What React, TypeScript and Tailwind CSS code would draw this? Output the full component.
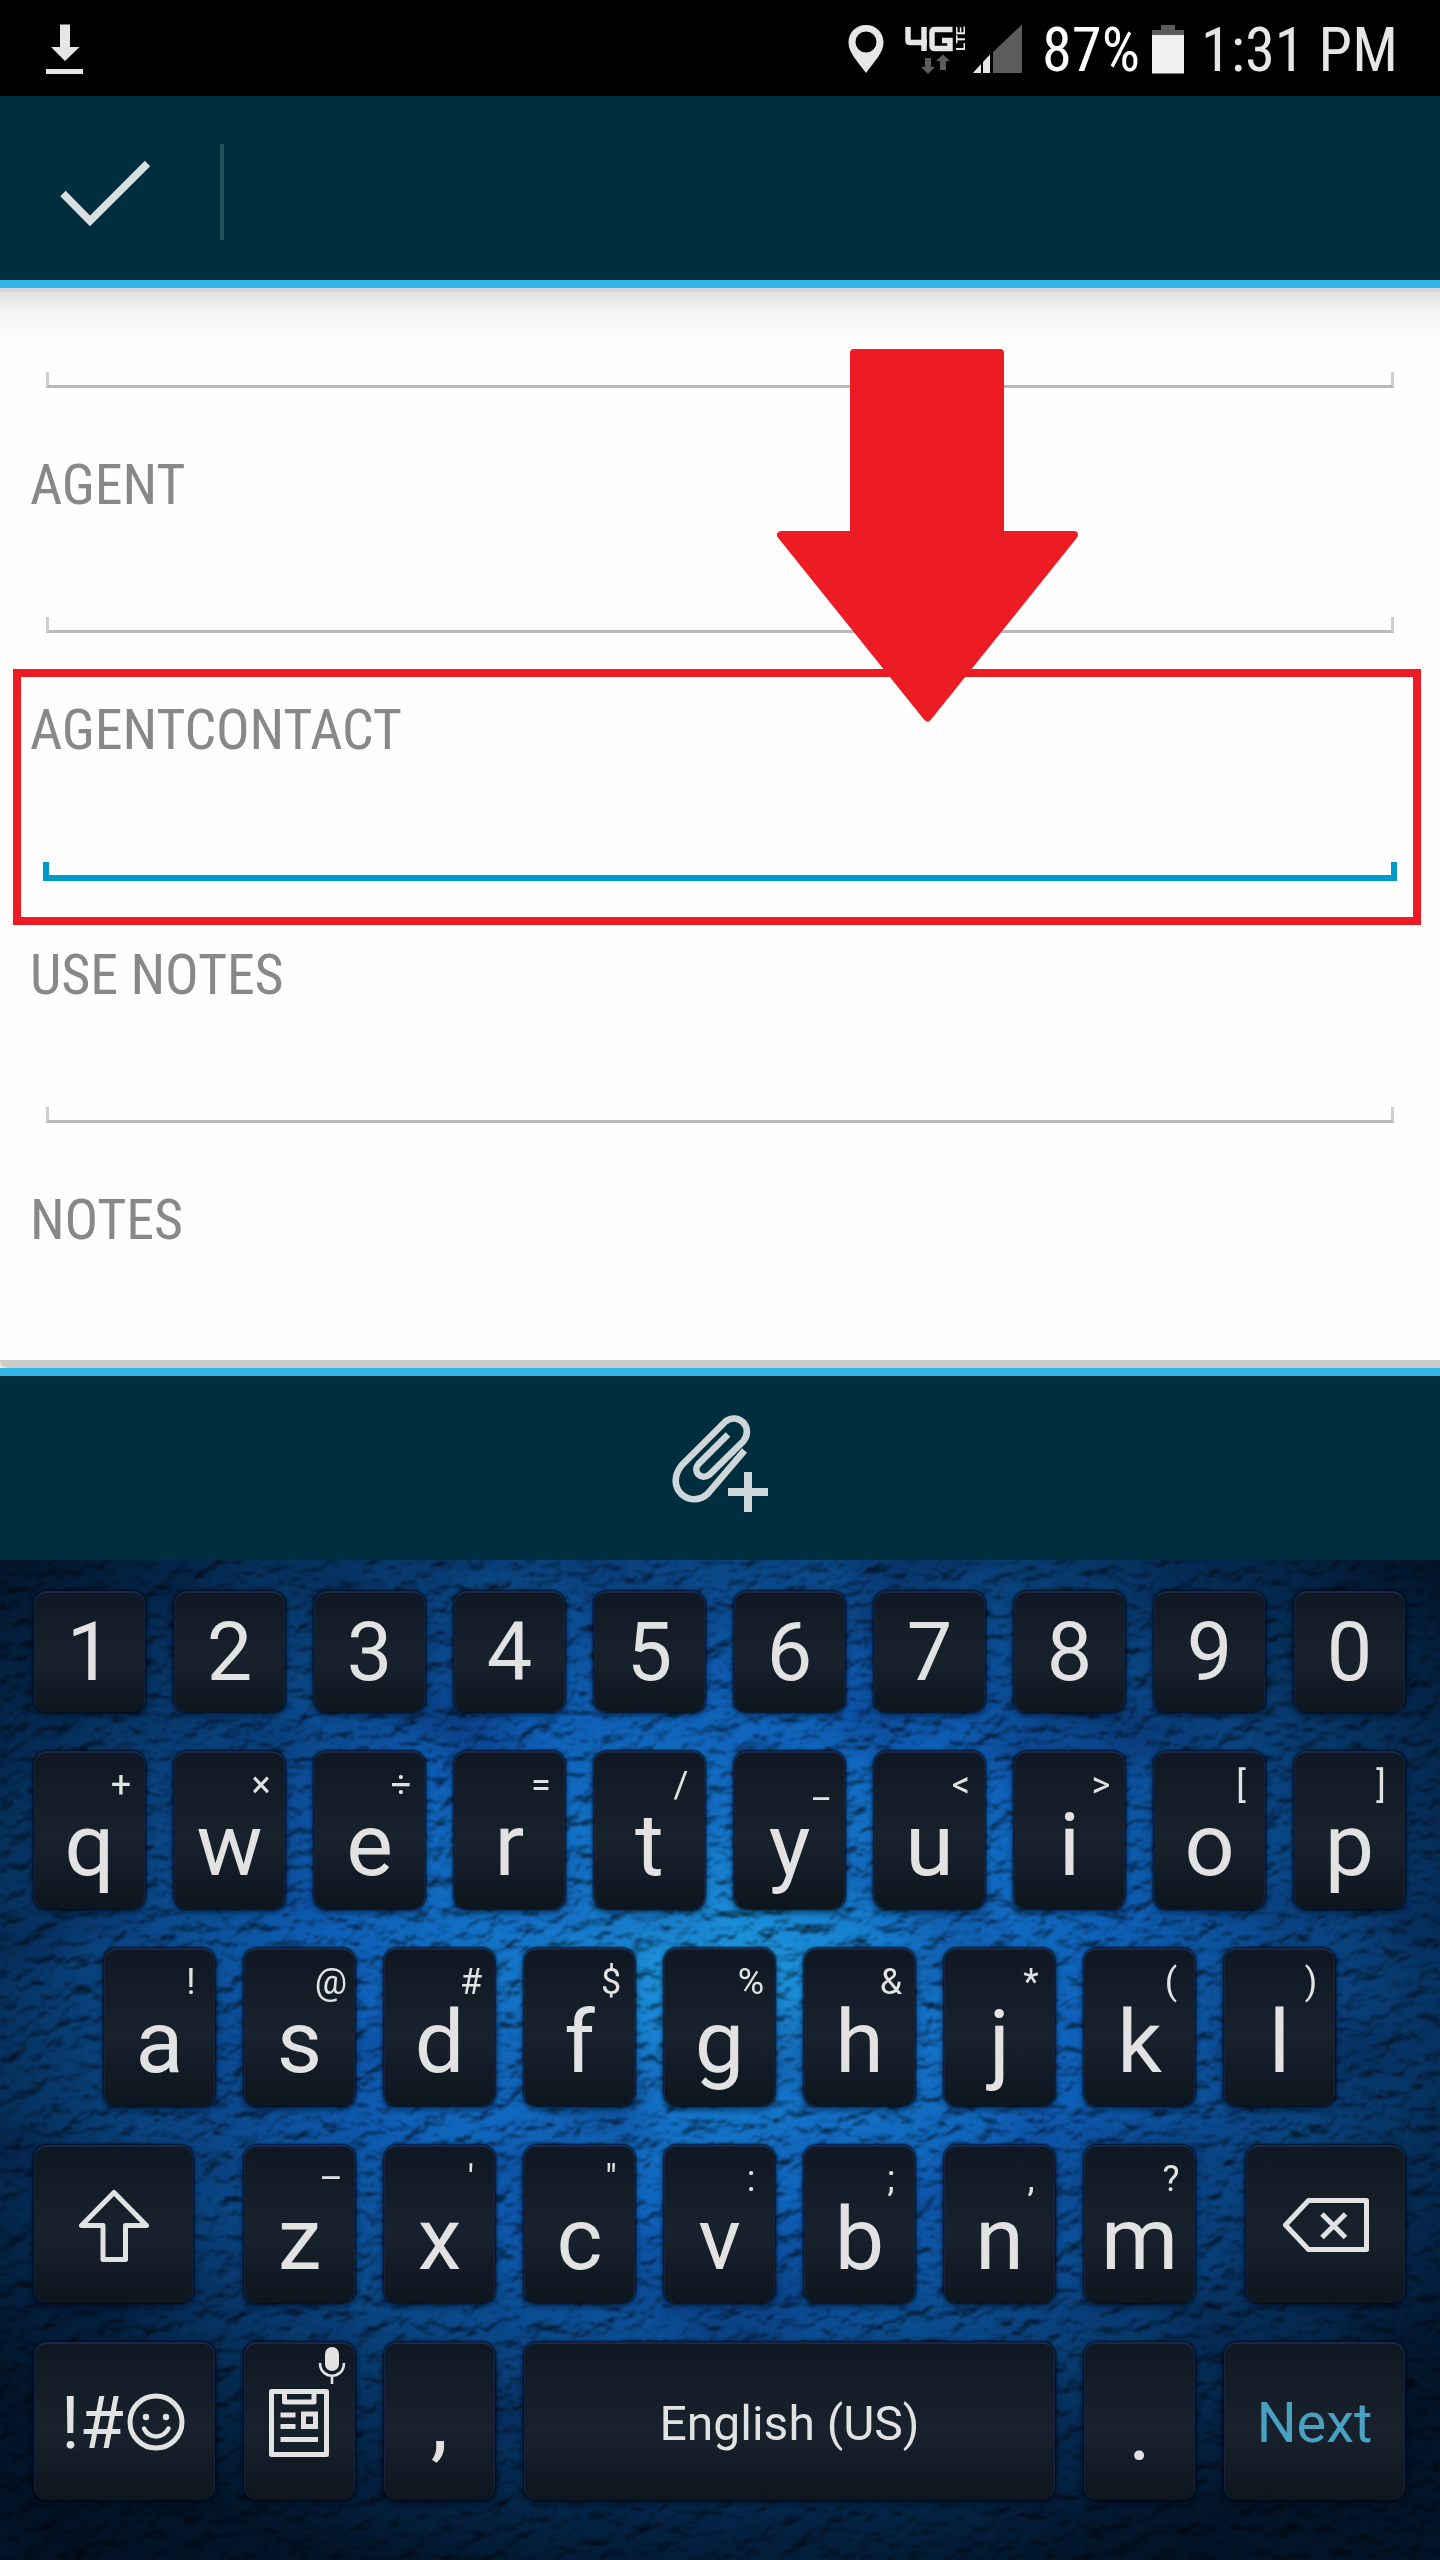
import React from "react";

const ROBOTO = "font-['Roboto','Liberation_Sans',sans-serif]";
const CONDENSED =
  "font-['Roboto_Condensed','Roboto','Liberation_Sans',sans-serif] [font-stretch:75%]";

function StatusBar() {
  return (
    <div className={`flex h-24 w-full items-start bg-black text-[#e6e6e6] ${CONDENSED}`}>
      <svg className="ml-[46px] mt-6 h-[50px] w-[37px]" viewBox="0 0 37 50" fill="#e6e6e6">
        <path d="M14 0.5h10v22.5h9.5L19 37 5 23h9z" />
        <rect x="0" y="45" width="37" height="5" />
      </svg>
      <div className="flex-1" />
      <svg className="mt-[25px] h-12 w-9" viewBox="0 0 36 48" fill="#e6e6e6" fillRule="evenodd">
        <path d="M18 0C8 0 .5 7.600 .5 17.500.5 28 9.500 36 18 48c8.500-12 17.500-20 17.500-30.500C35.500 7.600 28 0 18 0zm0 6.500a10.500 10.500 0 1 1 0 21 10.500 10.500 0 0 1 0-21z" />
      </svg>
      <svg className="ml-[21px] mt-6 h-[50px] w-[61px] overflow-visible" viewBox="0 0 61 50">
        <g fill="none" stroke="#e6e6e6" strokeWidth="5.500">
          <path d="M3 3v13.500q0 2 2 2H22M19 3v24" />
          <path d="M47.500 5.500H30q-3 0-3 3v13q0 3 3 3h15V16.500H37" />
        </g>
        <text
          transform="translate(60 27) rotate(-90)"
          className="font-['Liberation_Sans'] text-[13.500px] font-bold"
          fill="#e6e6e6"
          textLength="25"
          lengthAdjust="spacingAndGlyphs"
        >
          LTE
        </text>
        <path fill="#5c5c5c" d="M20 34h6v9h4l-7 7-7-7h4zM35 46v-9h-4l7-6.500 7 6.500h-4v9z" />
      </svg>
      <svg className="ml-[6px] mt-6 h-[50px] w-[50px]" viewBox="0 0 50 50">
        <path fill="#e6e6e6" d="M1 49l8-9v9zM11 38l7-7.500V49h-7z" />
        <path fill="#5c5c5c" d="M21 28L50 0.500V49H21z" />
      </svg>
      <span className="ml-[20px] mt-[16px] w-[96px] whitespace-nowrap text-[60.500px] leading-[70px] text-white">
        87%
      </span>
      <svg className="ml-[14px] mt-6 h-[50px] w-8" viewBox="0 0 32 50">
        <path fill="#5c5c5c" d="M9 1h14v5h9v6H0V6h9z" />
        <rect y="11" width="32" height="38.500" fill="#f0f0f0" />
      </svg>
      <span className="ml-[17px] mr-[43px] mt-[16px] w-[196px] whitespace-nowrap text-[60.500px] leading-[70px]">
        1:31 PM
      </span>
    </div>
  );
}

function ActionBar() {
  return (
    <header className="flex h-48 w-full items-start border-b-8 border-[#33b5e5] bg-[#002e3e]">
      <svg className="ml-[60px] mt-[65px] h-[66px] w-[91px]" viewBox="0 0 91 66">
        <path d="M3 32.500L30 60 87.500 2.500" fill="none" stroke="#d9e0e2" strokeWidth="7.500" />
      </svg>
      <div className="ml-[69px] mt-12 h-24 w-1 bg-[#264d5a]" />
    </header>
  );
}

function Underline({ active = false }: { active?: boolean }) {
  return active ? (
    <div className="mx-[43px] -mb-[3px] h-[19px] shrink-0 border-x-[6px] border-b-[6px] border-[#0099cc]" />
  ) : (
    <div className="mx-[46px] h-4 shrink-0 border-x-[3px] border-b-[3px] border-x-[#cecece] border-b-[#b9b9b9]" />
  );
}

function Field({
  label,
  active = false,
  underlined = true,
}: {
  label: string;
  active?: boolean;
  underlined?: boolean;
}) {
  return (
    <div className="relative flex h-[245px] shrink-0 flex-col">
      <label
        className={`ml-[30px] mt-[65px] whitespace-nowrap text-[56px] leading-[64px] tracking-[-0.15px] text-[#888888] ${CONDENSED}`}
      >
        {label}
      </label>
      <div className="flex-1" />
      {underlined && <Underline active={active} />}
      {active && (
        <div className="absolute left-[13px] top-[36px] h-64 w-[1408px] border-8 border-[#ed1c24]" />
      )}
    </div>
  );
}

function Form() {
  return (
    <main className="relative flex h-[1072px] w-full flex-col overflow-hidden bg-[#fefefe]">
      <div className="flex h-[100px] shrink-0 flex-col">
        <div className="h-1 bg-[#d5d5d5]" />
        <div className="h-12 bg-linear-to-b from-[#e0e0e0] via-[#f4f4f4] via-40% to-[#fefefe]" />
        <div className="flex-1" />
        <Underline />
      </div>
      <Field label="AGENT" />
      <Field label="AGENTCONTACT" active />
      <Field label="USE NOTES" />
      <Field label="NOTES" underlined={false} />
      <svg className="absolute left-[777px] top-[61px] h-[373px] w-[301px]" viewBox="0 0 301 373">
        <path
          d="M77 4h146v182h74L150.500 368.500 4 186h73z"
          fill="#ed1c24"
          stroke="#ed1c24"
          strokeWidth="8"
          strokeLinejoin="round"
        />
      </svg>
    </main>
  );
}

function AttachmentBar() {
  return (
    <div className="w-full">
      <div className="h-2 bg-[#efe9c0]">
        <div className="h-2 rounded-bl-lg bg-[#cccccc]" />
      </div>
      <div className="h-48 border-t-8 border-[#33b5e5] bg-[#002e3e]">
        <svg className="ml-[672px] mt-[38px] h-[100px] w-[98px]" viewBox="0 0 98 100">
          <path
            d="M56 20.500L26.500 50c-6.500 8 3 17 11 10.500L71.500 27C82 13 66-2 53.500 7.500L9.500 51.500C-8 74 18 96 36 79.500L72.500 36.500"
            fill="none"
            stroke="#cdd6d9"
            strokeWidth="6.600"
          />
          <path d="M76 58v40M56 78h40" stroke="#cdd6d9" strokeWidth="8" />
        </svg>
      </div>
    </div>
  );
}

const KEY =
  "flex flex-col rounded-[13px] border-t-2 border-x border-t-[#1b2748] border-x-[#17233a] bg-linear-to-b from-[#0f1822] via-[#18222d] via-55% to-[#0d151e] text-[#e2e2e2] shadow-[0_0_2px_1px_rgba(0,8,20,0.85),0_3px_5px_2px_rgba(0,8,20,0.4)]";

function LetterKey({ letter, hint }: { letter: string; hint: string }) {
  return (
    <div className={`${KEY} h-[158px] w-[111px]`}>
      <span className="mt-4 h-8 w-[46px] self-end text-center text-[36px] leading-8">{hint}</span>
      <span className="text-center text-[88px] leading-[88px]">{letter}</span>
    </div>
  );
}

function LeatherBackdrop() {
  return (
    <>
      <div className="absolute inset-0 bg-[radial-gradient(ellipse_940px_640px_at_50%_41%,#1e9be0_0%,#1478cc_20%,#0e60b8_42%,#094684_64%,#04284e_84%,#021428_100%)]" />
      <svg className="absolute inset-0 h-full w-full mix-blend-multiply" preserveAspectRatio="none">
        <filter id="patches" x="0" y="0" width="100%" height="100%">
          <feTurbulence type="fractalNoise" baseFrequency="0.006 0.009" numOctaves="2" seed="21" />
          <feColorMatrix values="1.400 0 0 0 0.250  1.400 0 0 0 0.250  1.200 0 0 0 0.400  0 0 0 0 1" />
        </filter>
        <rect width="100%" height="100%" filter="url(#patches)" />
      </svg>
      <svg className="absolute inset-0 h-full w-full mix-blend-multiply" preserveAspectRatio="none">
        <filter id="leather" x="0" y="0" width="100%" height="100%" colorInterpolationFilters="sRGB">
          <feTurbulence type="fractalNoise" baseFrequency="0.045 0.065" numOctaves="3" seed="5" />
          <feDiffuseLighting lightingColor="#ffffff" surfaceScale="6" diffuseConstant="1.150">
            <feDistantLight azimuth="250" elevation="62" />
          </feDiffuseLighting>
          <feGaussianBlur stdDeviation="0.900" />
        </filter>
        <rect width="100%" height="100%" filter="url(#leather)" />
      </svg>
    </>
  );
}

function Keyboard() {
  return (
    <section
      className={`relative flex h-[1000px] w-full flex-col overflow-hidden bg-[#02142c] pl-[34px] pt-[31px] [font-weight:440] ${ROBOTO}`}
    >
      <LeatherBackdrop />
      <div className="relative flex flex-col">
        <div className="flex gap-[29px]">
          {"1234567890".split("").map((n) => (
            <div
              key={n}
              className={`${KEY} h-[121px] w-[111px] text-center text-[81px] leading-[119px]`}
            >
              {n}
            </div>
          ))}
        </div>
        <div className="mt-[39px] flex gap-[29px]">
          {["q+", "w×", "e÷", "r=", "t/", "y_", "u<", "i>", "o[", "p]"].map((k) => (
            <LetterKey key={k} letter={k[0]} hint={k[1]} />
          ))}
        </div>
        <div className="ml-[70px] mt-[39px] flex gap-[29px]">
          {["a!", "s@", "d#", "f$", "g%", "h&", "j*", "k(", "l)"].map((k) => (
            <LetterKey key={k} letter={k[0]} hint={k[1]} />
          ))}
        </div>
        <div className="mt-[39px] flex gap-[29px]">
          <div className={`${KEY} mr-[22px] h-[158px] w-[159px] items-center`}>
            <svg className="mt-[42px] h-[74px] w-[72px]" viewBox="0 0 72 74">
              <path
                d="M36 3.500L68.500 36.500H47.500V70.500H25V36.500H3.500z"
                fill="none"
                stroke="#e2e2e2"
                strokeWidth="5"
                strokeLinejoin="round"
              />
            </svg>
          </div>
          {["z–", "x'", 'c"', "v:", "b;", "n,", "m?"].map((k) => (
            <LetterKey key={k} letter={k[0]} hint={k[1]} />
          ))}
          <div className={`${KEY} ml-[22px] h-[158px] w-[159px] items-center`}>
            <svg className="mt-[51px] h-[54px] w-[86px]" viewBox="0 0 86 54">
              <path
                d="M25.500 2.500H83.500V51.500H25.500L2.500 27zM39 16L62.500 39.500M62.500 16L39 39.500"
                fill="none"
                stroke="#e2e2e2"
                strokeWidth="5"
                strokeLinejoin="round"
              />
            </svg>
          </div>
        </div>
        <div className="mt-[39px] flex gap-[29px]">
          <div className={`${KEY} h-[158px] w-[181px]`}>
            <div className="flex">
              <span className="ml-[26px] mt-10 w-[66px] text-[72px] leading-[80px]">!#</span>
              <svg className="mt-[49px] h-[58px] w-[58px]" viewBox="0 0 58 58">
                <circle cx="29" cy="29" r="26" fill="none" stroke="#e2e2e2" strokeWidth="5" />
                <circle cx="19" cy="24" r="3.200" fill="#e2e2e2" />
                <circle cx="39" cy="24" r="3.200" fill="#e2e2e2" />
                <path
                  d="M17 35.500c5 10.500 19 10.500 24.500 0"
                  fill="none"
                  stroke="#e2e2e2"
                  strokeWidth="4.500"
                  strokeLinecap="round"
                />
              </svg>
            </div>
          </div>
          <div className={`${KEY} h-[158px] w-[111px]`}>
            <svg className="ml-[23px] mt-[3px] h-[112px] w-[80px]" viewBox="0 0 80 112">
              <rect x="57" y="0" width="14" height="24" rx="7" fill="#e2e2e2" />
              <path
                d="M52 16c0 17 24 17 24 0M64 28v9"
                fill="none"
                stroke="#e2e2e2"
                strokeWidth="2.600"
              />
              <g fill="none" stroke="#e2e2e2" strokeWidth="5" strokeLinejoin="round">
                <rect x="3.500" y="44.500" width="55" height="63" />
                <path d="M16.500 45v10h29.500V45" />
                <path d="M12.500 68h15M12.500 79.500h15M12.500 92.500H50M35.500 67h12v12.500h-12z" strokeLinejoin="miter" />
              </g>
            </svg>
          </div>
          <div className={`${KEY} h-[158px] w-[111px] text-center text-[88px] leading-[151px]`}>,</div>
          <div className={`${KEY} h-[158px] w-[531px] text-center text-[48px] leading-[159px]`}>
            English (US)
          </div>
          <div className={`${KEY} h-[158px] w-[111px] text-center text-[88px] leading-[169px]`}>.</div>
          <div
            className={`${KEY} h-[158px] w-[181px] text-center text-[56px] leading-[158px]`}
          >
            <span className="font-normal text-[#4aa0c2]">Next</span>
          </div>
        </div>
      </div>
    </section>
  );
}

export default function App() {
  return (
    <div className="flex h-[2560px] w-[1440px] flex-col overflow-hidden bg-black">
      <StatusBar />
      <ActionBar />
      <Form />
      <AttachmentBar />
      <Keyboard />
    </div>
  );
}
